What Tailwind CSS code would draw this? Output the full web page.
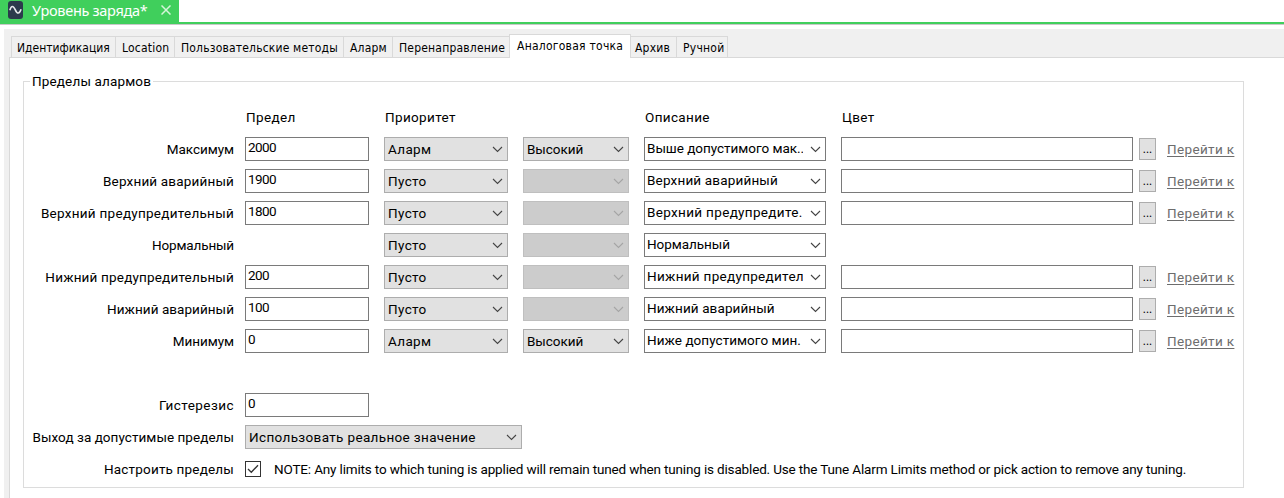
<!DOCTYPE html>
<html lang="ru">
<head>
<meta charset="utf-8">
<title>Уровень заряда</title>
<script src="https://cdn.jsdelivr.net/npm/@tailwindcss/browser@4"></script>
</head>
<body class="h-[498px] overflow-hidden bg-white font-['Roboto','Liberation_Sans',sans-serif] text-[13.5px] leading-4 text-black">
<svg class="hidden">
  <symbol id="chev" viewBox="0 0 11 7"><path d="M1 1l4.5 4.5L10 1" fill="none" stroke="currentColor" stroke-width="1.1"/></symbol>
</svg>
<header class="flex h-[25px] flex-col border-b border-[#c8c8c8]">
  <div class="flex h-[22px] w-[179px] items-start bg-[#40cf5c] pl-2 text-white">
    <svg class="mt-px h-[18px] w-[15px] shrink-0" viewBox="0 0 15 18"><rect width="15" height="18" rx="3" fill="#2b3a4c"/><path d="M1.8 9.2C3.4 4.3 5.2 4.3 7.3 8.8s4 4.4 5.8-.6" fill="none" stroke="#e6e9ec" stroke-width="1.6"/></svg>
    <span class="ml-[9px] w-[115px] whitespace-nowrap font-['Noto_Sans',sans-serif] text-[14.5px] leading-5 tracking-[-0.3px]">Уровень заряда*</span>
    <svg class="ml-[14px] mt-[5px] size-[10px]" viewBox="0 0 10 10"><path d="M.5.5l9 9M9.5.5l-9 9" stroke="#d5f5da" stroke-width="1.5"/></svg>
  </div>
  <div class="h-[2px] bg-[#40cf5c]"></div>
</header>
<main class="ml-1 mt-1 h-[469px] bg-[#f0f0f0] pl-[5px] pt-[5px]">
  <nav class="flex h-[23px] items-end pl-[2px] font-['DejaVu_Sans_Condensed','DejaVu_Sans',sans-serif] text-[12px] font-stretch-condensed whitespace-nowrap">
    <div class="h-[21px] w-[104px] border-l border-t border-[#d9d9d9] pl-[5px] pt-[3px]">Идентификация</div>
    <div class="h-[21px] w-[59px] border-l border-t border-[#d9d9d9] pl-[6px] pt-[3px] tracking-[0.2px]">Location</div>
    <div class="h-[21px] w-[169px] border-l border-t border-[#d9d9d9] pl-[6px] pt-[3px] tracking-[0.18px]">Пользовательские методы</div>
    <div class="h-[21px] w-[49px] border-l border-t border-[#d9d9d9] pl-[6px] pt-[3px] tracking-[0.2px]">Аларм</div>
    <div class="h-[21px] w-[117px] border-l border-t border-[#d9d9d9] pl-[6px] pt-[3px] tracking-[0.2px]">Перенаправление</div>
    <div class="z-10 -mb-px h-[24px] w-[122px] border-x border-t border-[#d9d9d9] bg-white pl-[7px] pt-[3px] tracking-[0.25px]">Аналоговая точка</div>
    <div class="h-[21px] w-[45px] border-t border-[#d9d9d9] pl-[4px] pt-[3px] tracking-[0.2px]">Архив</div>
    <div class="h-[21px] w-[52px] border-x border-t border-[#d9d9d9] pl-[6px] pt-[3px] tracking-[0.25px]">Ручной</div>
  </nav>
  <div class="h-[441px] border-l border-t border-[#d9d9d9] bg-white pl-[13px] pt-[15px]">
    <fieldset class="h-[415px] w-[1221px] border border-[#dcdcdc]">
      <legend class="ml-[6px] h-4 px-[2px] tracking-[0.15px]">Пределы алармов</legend>
      <div id="rows" class="mt-4 flex flex-col gap-2"></div>
    </fieldset>
  </div>
</main>
<script>
const label = (t, k = '') => `<div class="mr-[11px] w-[210px] shrink-0 text-right whitespace-nowrap ${k}">${t}</div>`;
const input = t => `<div class="mr-[15px] h-6 w-[124px] border border-[#7a7a7a] pl-[2px] pt-px tracking-[-0.6px]">${t}</div>`;
const chev = '<svg class="h-[7px] w-[11px] shrink-0 text-[#444]"><use href="#chev"/></svg>';
const prio = t => `<div class="mr-[15px] flex h-6 w-[124px] items-center justify-between border border-[#adadad] bg-[#e1e1e1] pl-[3px] pr-1 tracking-[0.35px]">${t}${chev}</div>`;
const level = t => t
  ? `<div class="mr-[15px] flex h-6 w-[106px] items-center justify-between border border-[#adadad] bg-[#e1e1e1] pl-[3px] pr-1 tracking-[-0.05px]">${t}${chev}</div>`
  : '<div class="mr-[15px] flex h-6 w-[106px] items-center justify-end border border-[#bfbfbf] bg-[#cccccc] pr-1"><svg class="h-[7px] w-[11px] text-[#a5a5a5]"><use href="#chev"/></svg></div>';
const combo = (t, k) => `<div class="mr-[15px] flex h-6 w-[182px] items-center justify-between border border-[#7a7a7a] pl-[2px] pr-1"><span class="-mt-[2px] w-[156px] overflow-hidden whitespace-nowrap ${k}">${t}</span>${chev}</div>`;
const color = `<div class="mr-[6px] h-6 w-[292px] border border-[#7a7a7a]"></div><div class="mr-[11px] h-[22px] w-[17px] border border-[#adadad] bg-[#e1e1e1] pt-[2px] text-center text-[12px]">...</div><a class="text-[#6d6d6d] underline underline-offset-2 tracking-[0.35px] whitespace-nowrap">Перейти к</a>`;
const row = h => `<div class="flex h-6 items-center">${h}</div>`;
// name, name tracking, limit, priority, level, description, description tracking
const data = [
  ['Максимум','tracking-[-0.05px]','2000','Аларм','Высокий','Выше допустимого мак..','tracking-[-0.03px]'],
  ['Верхний аварийный','tracking-[0.17px]','1900','Пусто','','Верхний аварийный','tracking-[0.17px]'],
  ['Верхний предупредительный','tracking-[0.27px]','1800','Пусто','','Верхний предупредите.','tracking-[0.33px]'],
  ['Нормальный','tracking-[-0.15px]',null,'Пусто','','Нормальный','tracking-[-0.05px]'],
  ['Нижний предупредительный','tracking-[0.18px]','200','Пусто','','Нижний предупредител','tracking-[0.3px]'],
  ['Нижний аварийный','tracking-[0.05px]','100','Пусто','','Нижний аварийный','tracking-[0.1px]'],
  ['Минимум','tracking-[-0.05px]','0','Аларм','Высокий','Ниже допустимого мин.','tracking-[0.05px]'],
];
document.getElementById('rows').innerHTML =
  row(label('') + '<div class="flex pl-px tracking-[0.35px]"><div class="w-[139px]">Предел</div><div class="w-[260px]">Приоритет</div><div class="w-[197px]">Описание</div><div>Цвет</div></div>') +
  data.map(([n, nk, v, p, l, d, dk]) => row(label(n, nk) + (v === null ? '<div class="w-[139px]"></div>' : input(v)) + prio(p) + level(l) + combo(d, dk) + (v === null ? '' : color))).join('') +
  row('') +
  row(label('Гистерезис', 'tracking-[0.45px]') + input('0')) +
  row(label('Выход за допустимые пределы', 'tracking-[0.05px]') + `<div class="flex h-6 w-[277px] items-center justify-between border border-[#adadad] bg-[#e1e1e1] pl-[3px] pr-1 tracking-[0.35px]">Использовать реальное значение${chev}</div>`) +
  row(label('Настроить пределы', 'tracking-[0.18px]') + '<div class="mr-[13px] flex size-4 items-center justify-center border border-[#333]"><svg class="h-[10px] w-3" viewBox="0 0 12 10"><path d="M1 5l3.3 3.3L11 1.2" fill="none" stroke="#333" stroke-width="1.3"/></svg></div><span class="whitespace-nowrap tracking-[-0.157px]">NOTE: Any limits to which tuning is applied will remain tuned when tuning is disabled. Use the Tune Alarm Limits method or pick action to remove any tuning.</span>');
</script>
</body>
</html>
